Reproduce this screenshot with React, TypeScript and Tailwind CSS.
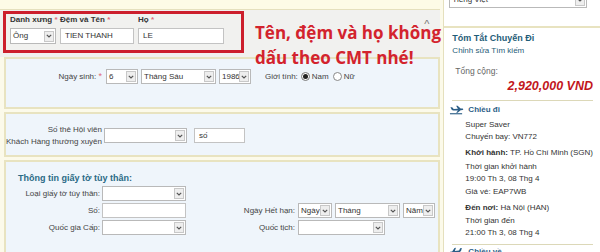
import React from "react";

const Sel = ({ w, text, h = 15 }: { w: number; text?: string; h?: number }) => (
  <div
    className="flex shrink-0 items-center border border-[#b9b9b9] bg-white text-[8px] text-[#333]"
    style={{ width: w, height: h }}
  >
    <span className="flex-1 overflow-hidden whitespace-nowrap pl-[2px] leading-[12px]">{text}</span>
    <span className="mr-[1px] flex h-[11px] w-[10px] shrink-0 items-center justify-center border border-[#c8c8c8] bg-[#eeeeee]">
      <svg width="6" height="4" viewBox="0 0 6 4">
        <path d="M0.8 0.8 L3 3 L5.2 0.8" stroke="#555" strokeWidth="1.2" fill="none" />
      </svg>
    </span>
  </div>
);

const Inp = ({ w, text, h = 15 }: { w: number; text?: string; h?: number }) => (
  <div
    className="flex shrink-0 items-center whitespace-nowrap border border-[#c3c3c3] bg-white pl-[4px] text-[8px] leading-[12px] text-[#333]"
    style={{ width: w, height: h }}
  >
    {text}
  </div>
);

const Plane = ({ flip }: { flip?: boolean }) => (
  <svg width="15" height="10" viewBox="0 0 16 10" style={flip ? { transform: "scaleX(-1) rotate(12deg)" } : undefined}>
    <path d="M1 9 L14 9" stroke="#2a5d86" strokeWidth="1.2" />
    <path
      d="M1.5 2 L3.4 2 L5 4 L9.5 3.6 L7.6 0.5 L9.2 0.5 L12.4 3.5 L14.6 3.4 Q16 4.1 14.6 4.9 L12.4 5.2 L9.2 7.8 L7.6 7.8 L9.6 5.4 L4.6 5.6 Q2.6 5.2 1.5 2 Z"
      fill="#2a5d86"
    />
  </svg>
);

const Lbl = ({ w, children, className = "" }: { w: number; children: React.ReactNode; className?: string }) => (
  <div
    className={`shrink-0 whitespace-nowrap pr-[2px] text-right text-[8px] leading-[10px] text-[#444] ${className}`}
    style={{ width: w }}
  >
    {children}
  </div>
);

export default function App() {
  return (
    <div
      className="relative flex h-[252px] w-[600px] overflow-hidden bg-[#fcfaea] text-[#333]"
      style={{ fontFamily: '"Liberation Sans", Arial, sans-serif' }}
    >
      {/* main column */}
      <div className="flex w-[447px] flex-col">
        <div className="h-[10px] border-b border-[#e5e0bd] bg-[#fdfbe6]" />
        {/* name section */}
        <div className="relative h-[47px] bg-[#f1f1ef] pl-[3px] pt-[1px]">
          <div className="flex h-[42px] w-[241px] gap-[4px] border-[3px] border-[#cc1f2d] pl-[4px]">
            <div className="flex w-[46px] flex-col">
              <div className="whitespace-nowrap text-[8px] font-bold leading-[11px] text-[#333]">
                Danh xưng <span className="text-[#e06a7a]">*</span>
              </div>
              <div className="mt-[3px]">
                <Sel w={46} text="Ông" h={16} />
              </div>
            </div>
            <div className="flex flex-col">
              <div className="whitespace-nowrap text-[8px] font-bold leading-[11px] text-[#333]">
                Đệm và Tên <span className="text-[#e06a7a]">*</span>
              </div>
              <div className="mt-[3px]">
                <Inp w={74} text="TIEN THANH" h={16} />
              </div>
            </div>
            <div className="flex flex-col">
              <div className="whitespace-nowrap text-[8px] font-bold leading-[11px] text-[#333]">
                Họ <span className="text-[#e06a7a]">*</span>
              </div>
              <div className="mt-[3px]">
                <Inp w={86} text="LE" h={16} />
              </div>
            </div>
          </div>
          <span className="absolute right-[11px] top-[9px] text-[11px] leading-none text-[#777]">^</span>
        </div>

        {/* birth section */}
        <div className="ml-[4px] flex h-[52px] flex-col border-2 border-[#e8e3c0] bg-[#eff5fb] pt-[10px]">
          <div className="flex items-center">
            <Lbl w={98}>
              Ngày sinh: <span className="text-[9px] text-[#e06a7a]">*</span>
            </Lbl>
            <div className="ml-[2px] flex gap-[3px]">
              <Sel w={32} text="6" />
              <Sel w={75} text="Tháng Sáu" />
              <Sel w={32} text="1986" />
            </div>
            <div className="ml-[14px] flex items-center gap-[2px] text-[8px] text-[#444]">
              <span>Giới tính:</span>
              <span className="ml-[1px] flex h-[9px] w-[9px] items-center justify-center rounded-full border border-[#777] bg-white">
                <span className="h-[5px] w-[5px] rounded-full bg-[#222]" />
              </span>
              <span>Nam</span>
              <span className="ml-[2px] h-[9px] w-[9px] rounded-full border border-[#888] bg-white" />
              <span>Nữ</span>
            </div>
          </div>
        </div>

        {/* member section */}
        <div className="ml-[4px] mt-[3px] flex h-[45px] items-center border-2 border-[#e8e3c0] bg-[#eff5fb] pt-[2px]">
          <div className="w-[96px] shrink-0 whitespace-nowrap text-right text-[8px] leading-[12px] text-[#444]">
            Số thẻ Hội viên
            <br />
            Khách Hàng thường xuyên
          </div>
          <div className="ml-[2px] flex items-center gap-[7px]">
            <Sel w={83} />
            <Inp w={51} text="số" />
          </div>
        </div>

        {/* id section */}
        <div className="ml-[4px] mt-[3px] flex flex-1 flex-col border-l-2 border-r-2 border-t-2 border-[#e8e3c0] bg-[#eff5fb] pl-[12px] pt-[10px]">
          <div className="whitespace-nowrap text-[9px] font-bold leading-[12px] text-[#2a6a86]">
            Thông tin giấy tờ tùy thân:
          </div>
          <div className="mt-[2px] flex">
            <div className="flex flex-col gap-[2px]">
              <div className="flex items-center">
                <Lbl w={84}>Loại giấy tờ tùy thân:</Lbl>
                <Sel w={84} />
              </div>
              <div className="flex items-center">
                <Lbl w={84}>Số:</Lbl>
                <Inp w={84} />
              </div>
              <div className="flex items-center">
                <Lbl w={84}>Quốc gia Cấp:</Lbl>
                <Sel w={84} />
              </div>
            </div>
            <div className="mt-[17px] flex flex-col gap-[2px]">
              <div className="flex items-center">
                <Lbl w={111}>Ngày Hết hạn:</Lbl>
                <div className="ml-[1px] flex gap-[3px]">
                  <Sel w={34} text="Ngày" />
                  <Sel w={65} text="Tháng" />
                  <Sel w={32} text="Năm" />
                </div>
              </div>
              <div className="flex items-center">
                <Lbl w={111}>Quốc tịch:</Lbl>
                <div className="ml-[1px]">
                  <Sel w={87} />
                </div>
              </div>
            </div>
          </div>
        </div>
      </div>

      {/* separator */}
      <div className="w-[3px] bg-[#fcfaea]" />

      {/* sidebar */}
      <div className="flex flex-1 flex-col border-l border-[#e5e0bd] bg-white">
        <div className="ml-[5px] mt-[-8px] flex h-[16px] items-center">
          <Sel w={138} text="Tiếng Việt" h={16} />
        </div>
        <div className="mt-[18px] flex flex-1 flex-col border-t-2 border-[#e8e3c0] pl-[8px] pr-[7px]">
          <div className="mt-[4px] whitespace-nowrap text-[9px] font-bold leading-[12px] text-[#1f5d78]">Tóm Tắt Chuyến Đi</div>
          <div className="mt-[1px] whitespace-nowrap text-[8px] leading-[12px] text-[#1f5d78]">Chỉnh sửa Tìm kiếm</div>
          <div className="ml-[3px] mt-[8px] whitespace-nowrap text-[8.5px] leading-[12px] text-[#666]">Tổng cộng:</div>
          <div className="mt-[1px] whitespace-nowrap text-right text-[12.5px] font-bold italic leading-[16px] text-[#c2161c]">
            2,920,000 VND
          </div>
          <div className="mt-[6px] border-t border-[#dcd8b8]" />
          <div className="-ml-[3px] mt-[3px] flex h-[12px] items-center gap-[4px]">
            <Plane />
            <span className="text-[8px] font-bold text-[#2a5d86]">Chiều đi</span>
          </div>
          <div className="ml-[13px] flex flex-col whitespace-nowrap text-[8px] leading-[12px] text-[#333]">
            <div className="mt-[3px]">Super Saver</div>
            <div>Chuyến bay: VN772</div>
            <div className="mt-[4px]">
              <b>Khởi hành:</b> TP. Hồ Chí Minh (SGN)
            </div>
            <div className="mt-[2px]">Thời gian khởi hành</div>
            <div>19:00 Th 3, 08 Thg 4</div>
            <div className="mt-[1px]">Giá vé: EAP7WB</div>
            <div className="mt-[4px]">
              <b>Đến nơi:</b> Hà Nội (HAN)
            </div>
            <div className="mt-[1px]">Thời gian đến</div>
            <div>21:00 Th 3, 08 Thg 4</div>
          </div>
          <div className="mt-[5px] border-t border-[#dcd8b8]" />
          <div className="-ml-[3px] mt-[1px] flex h-[12px] items-center gap-[4px]">
            <Plane flip />
            <span className="text-[8px] font-bold text-[#2a5d86]">Chiều về</span>
          </div>
        </div>
      </div>

      {/* annotation overlay */}
      <div
        className="absolute left-[255px] top-[20px] whitespace-nowrap text-[17px] font-bold leading-[25px] text-[#d3232d]"
        style={{ fontFamily: '"Open Sans", "Noto Sans", sans-serif' }}
      >
        Tên, đệm và họ không
        <br />
        dấu theo CMT nhé!
      </div>
    </div>
  );
}
